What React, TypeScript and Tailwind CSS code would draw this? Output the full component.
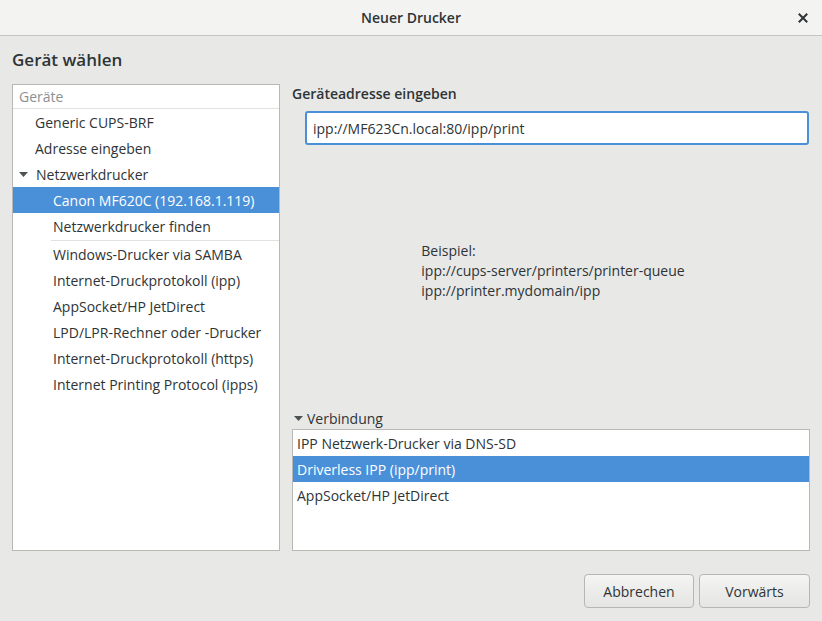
import { useState } from "react";

const deviceRows = [
  { label: "Generic CUPS-BRF", indent: 0 },
  { label: "Adresse eingeben", indent: 0 },
];

const networkOthers = [
  "Windows-Drucker via SAMBA",
  "Internet-Druckprotokoll (ipp)",
  "AppSocket/HP JetDirect",
  "LPD/LPR-Rechner oder -Drucker",
  "Internet-Druckprotokoll (https)",
  "Internet Printing Protocol (ipps)",
];

const connections = [
  "IPP Netzwerk-Drucker via DNS-SD",
  "Driverless IPP (ipp/print)",
  "AppSocket/HP JetDirect",
];

function DownArrow() {
  return (
    <svg width="9" height="5" viewBox="0 0 9 5" className="shrink-0">
      <path d="M0 0 L9 0 L4.5 5 Z" fill="#4d5254" />
    </svg>
  );
}

function CloseIcon() {
  return (
    <svg width="10" height="10" viewBox="0 0 10 10">
      <path
        d="M1.5 1.5 L8.5 8.5 M8.5 1.5 L1.5 8.5"
        stroke="#2e3436"
        strokeWidth="2"
        strokeLinecap="square"
      />
    </svg>
  );
}

export default function App() {
  const [address, setAddress] = useState("ipp://MF623Cn.local:80/ipp/print");
  const [selectedConnection, setSelectedConnection] = useState(1);

  return (
    <div
      className="w-[822px] h-[621px] bg-[#e8e8e7] flex flex-col text-[14px] text-[#2e3436] overflow-hidden"
      style={{ fontFamily: '"Open Sans", "Noto Sans", sans-serif' }}
    >
      {/* header bar */}
      <div className="h-[36px] shrink-0 bg-[#f3f3f2] border-b border-[#c4c4c1] flex items-center justify-between px-[14px]">
        <div className="w-[10px]" />
        <span className="font-semibold text-[14px] text-[#2e3436]">Neuer Drucker</span>
        <CloseIcon />
      </div>

      <div className="flex-1 flex flex-col px-[12px]">
        <h1 className="pt-[11px] text-[17px] font-semibold leading-[26px] text-[#2e3436]">
          Gerät wählen
        </h1>

        <div className="mt-[11px] flex gap-[12px]">
          {/* device list */}
          <div className="w-[268px] h-[467px] bg-white border border-[#b8b8b5] flex flex-col">
            <div className="h-[24px] border-b border-[#e2e2e0] flex items-center px-[6px] text-[#8d9091]">
              Geräte
            </div>
            {deviceRows.map((r) => (
              <div key={r.label} className="h-[26px] flex items-center pl-[22px]">
                {r.label}
              </div>
            ))}
            <div className="h-[26px] flex items-center pl-[6px] gap-[8px]">
              <DownArrow />
              <span>Netzwerkdrucker</span>
            </div>
            <div className="h-[26px] flex items-center pl-[40px] bg-[#4a90d9] text-white">
              Canon MF620C (192.168.1.119)
            </div>
            <div className="h-[26px] flex items-center pl-[40px]">Netzwerkdrucker finden</div>
            <div className="ml-[38px] mt-[1px] border-t border-[#e2e2e0]" />
            {networkOthers.map((label) => (
              <div key={label} className="h-[26px] flex items-center pl-[40px]">
                {label}
              </div>
            ))}
          </div>

          {/* address pane */}
          <div className="flex-1 h-[467px] flex flex-col">
            <div className="h-[19px] flex items-center font-semibold">Geräteadresse eingeben</div>
            <div className="mt-[8px] ml-[13px] mr-[1px]">
              <input
                value={address}
                onChange={(e) => setAddress(e.target.value)}
                className="w-full h-[34px] bg-white border-2 border-[#4a90d9] rounded-[3px] px-[6px] outline-none text-[#2e3436]"
              />
            </div>

            <div className="flex-1 flex items-center justify-center">
              <div className="leading-[20px] text-[#2e3436] pb-[12px] pl-[4px]">
                <div>Beispiel:</div>
                <div>ipp://cups-server/printers/printer-queue</div>
                <div>ipp://printer.mydomain/ipp</div>
              </div>
            </div>

            <div className="h-[20px] flex items-center gap-[4px] pl-[2px] mb-[1px]">
              <DownArrow />
              <span>Verbindung</span>
            </div>
            <div className="h-[122px] bg-white border border-[#b8b8b5] flex flex-col">
              {connections.map((label, i) => (
                <div
                  key={label}
                  onClick={() => setSelectedConnection(i)}
                  className={
                    i === selectedConnection
                      ? "h-[26px] flex items-center px-[4px] bg-[#4a90d9] text-white"
                      : "h-[26px] flex items-center px-[4px]"
                  }
                >
                  {label}
                </div>
              ))}
            </div>
          </div>
        </div>

        {/* action buttons */}
        <div className="mt-[23px] flex justify-end gap-[5px]">
          <button className="w-[110px] h-[34px] rounded-[4px] border border-[#b6b6b3] bg-gradient-to-b from-[#f4f4f3] to-[#e5e5e3] text-[#2e3436]">
            Abbrechen
          </button>
          <button className="w-[111px] h-[34px] rounded-[4px] border border-[#b6b6b3] bg-gradient-to-b from-[#f4f4f3] to-[#e5e5e3] text-[#2e3436]">
            Vorwärts
          </button>
        </div>
      </div>
    </div>
  );
}
